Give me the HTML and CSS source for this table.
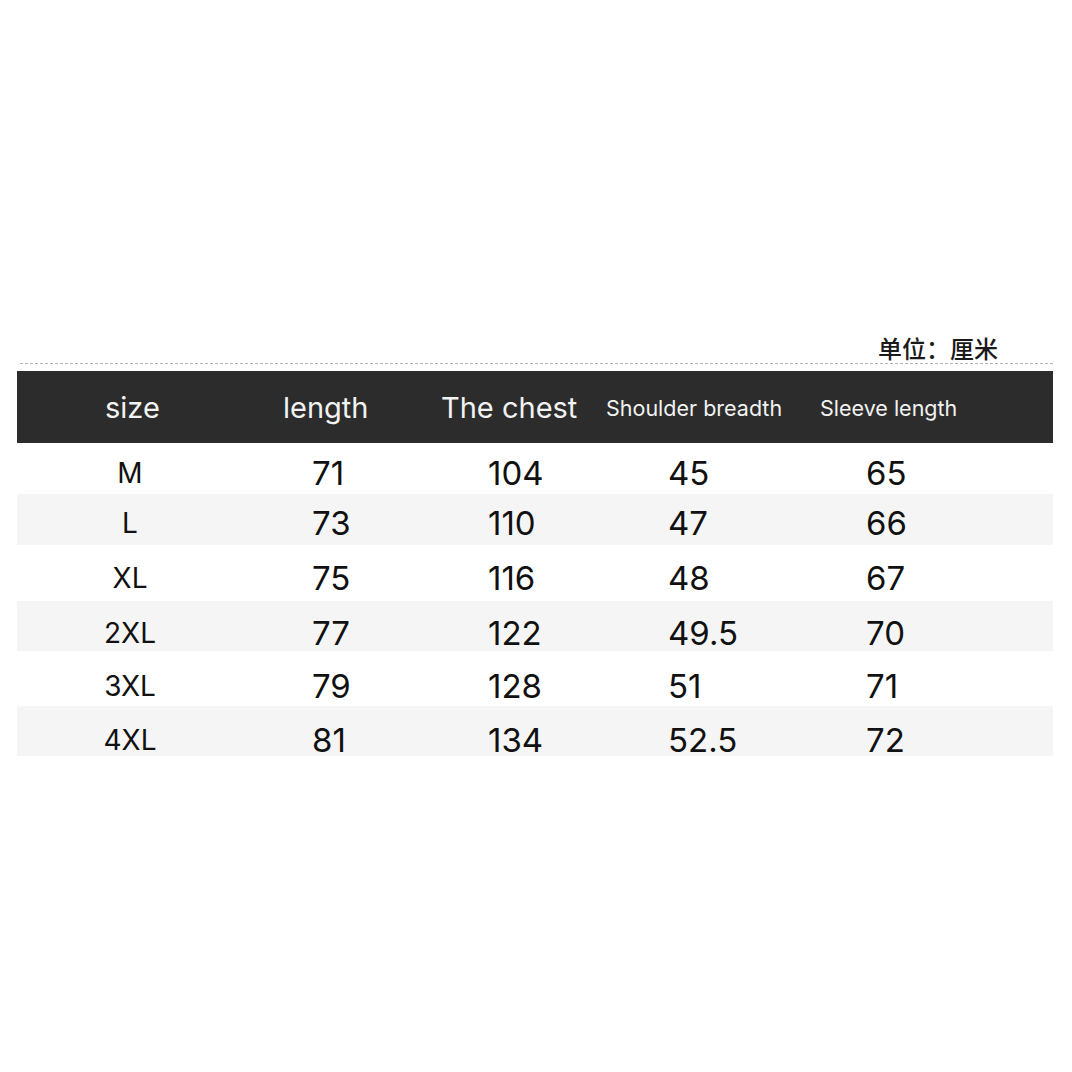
FILE: index.html
```html
<!DOCTYPE html>
<html lang="zh">
<head>
<meta charset="utf-8">
<title>Size chart</title>
<link rel="stylesheet" href="styles.css">
</head>
<body>
<div class="page">
  <div class="unit-row"><span class="unit">单位：厘米</span></div>
  <div class="dash"></div>
  <div class="table">
    <div class="head">
      <div class="hc c1">size</div>
      <div class="hc c2">length</div>
      <div class="hc c3">The chest</div>
      <div class="hc c4 small">Shoulder breadth</div>
      <div class="hc c5 small">Sleeve length</div>
    </div>
    <div class="row r1"><div class="sz">M</div><div class="v v2">71</div><div class="v v3">104</div><div class="v v4">45</div><div class="v v5">65</div></div>
    <div class="row r2 alt"><div class="sz">L</div><div class="v v2">73</div><div class="v v3">110</div><div class="v v4">47</div><div class="v v5">66</div></div>
    <div class="row r3"><div class="sz">XL</div><div class="v v2">75</div><div class="v v3">116</div><div class="v v4">48</div><div class="v v5">67</div></div>
    <div class="row r4 alt"><div class="sz">2XL</div><div class="v v2">77</div><div class="v v3">122</div><div class="v v4">49.5</div><div class="v v5">70</div></div>
    <div class="row r5"><div class="sz">3XL</div><div class="v v2">79</div><div class="v v3">128</div><div class="v v4">51</div><div class="v v5">71</div></div>
    <div class="row r6 alt"><div class="sz">4XL</div><div class="v v2">81</div><div class="v v3">134</div><div class="v v4">52.5</div><div class="v v5">72</div></div>
  </div>
</div>
</body>
</html>
```
FILE: styles.css
```css
html, body {
  margin: 0;
  padding: 0;
  background: #ffffff;
}
body {
  font-family: Inter, "Noto Sans", sans-serif;
  color: #111;
}
.page {
  padding: 334px 19px 0 17px;
}
.unit-row {
  display: flex;
  justify-content: flex-end;
  padding-right: 55px;
  height: 28px;
}
.unit {
  font-family: "Noto Sans CJK SC", sans-serif;
  font-weight: 500;
  font-size: 24px;
  line-height: 28px;
  color: #1a1a1a;
}
.dash {
  border-top: 1px dashed #b3b3b3;
  margin: 1px 0 7px 3px;
}
.head {
  display: grid;
  grid-template-columns: 266px 158px 165px 214px 1fr;
  height: 72px;
  align-items: center;
  background: #2c2c2c;
  color: #f2f2f2;
}
.hc {
  font-size: 29px;
  line-height: 32px;
  padding-top: 2px;
}
.hc.c1 { padding-left: 88px; }
.hc.small { font-size: 21.5px; }
.row {
  display: grid;
  grid-template-columns: 266px 158px 165px 214px 1fr;
  align-items: start;
  box-sizing: border-box;
}
.row.alt { background: #f5f5f5; }
.sz {
  width: 226px;
  text-align: center;
  font-size: 28px;
  line-height: 30px;
}
.v {
  font-size: 33px;
  line-height: 30px;
}
.v2 { padding-left: 29px; }
.v3 { padding-left: 47px; }
.v4 { padding-left: 62px; }
.v5 { padding-left: 46px; }
.r1 { height: 51px; padding-top: 15px; }
.r2 { height: 51px; padding-top: 14px; }
.r3 { height: 56px; padding-top: 18px; }
.r4 { height: 50px; padding-top: 17px; }
.r5 { height: 55px; padding-top: 20px; }
.r6 { height: 50px; padding-top: 19px; }
```
